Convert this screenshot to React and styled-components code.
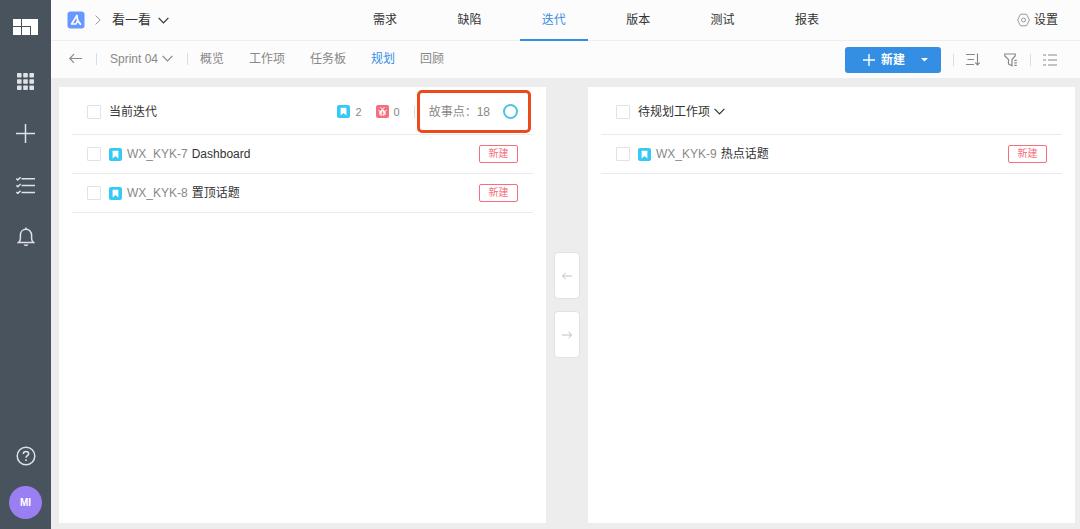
import React, { useState } from "react";
import styled, { createGlobalStyle } from "styled-components";

const NAV_TABS = ["需求", "缺陷", "迭代", "版本", "测试", "报表"];
const VIEW_TABS = ["概览", "工作项", "任务板", "规划", "回顾"];

const SPRINT_ITEMS = [
  { id: "WX_KYK-7", title: "Dashboard", state: "新建" },
  { id: "WX_KYK-8", title: "置顶话题", state: "新建" },
];

const BACKLOG_ITEMS = [{ id: "WX_KYK-9", title: "热点话题", state: "新建" }];

function Chevron() {
  return (
    <svg width="11" height="7" viewBox="0 0 11 7" fill="none" stroke="currentColor" strokeWidth="1.2">
      <path d="M0.6 0.8 5.5 5.8 10.4 0.8" />
    </svg>
  );
}

function Arrow({ width = 12, flip }) {
  return (
    <svg width={width} height={width} viewBox="0 0 12 12" fill="none" stroke="currentColor" strokeWidth="1.1">
      <path d={flip ? "M0 6H11.5M7.8 2 11.5 6 7.8 10" : "M12 6H0.7M4.6 2 0.7 6 4.6 10"} />
    </svg>
  );
}

function StoryIcon() {
  return (
    <svg width="13" height="13" viewBox="0 0 13 13">
      <rect width="13" height="13" rx="2" fill="#35c9f5" />
      <path d="M3.6 2.8h5.8v7.6L6.5 8 3.6 10.4z" fill="#fff" />
    </svg>
  );
}

function BugIcon() {
  return (
    <svg width="13" height="13" viewBox="0 0 13 13">
      <rect width="13" height="13" rx="2" fill="#f5707c" />
      <path d="M6.5 4.6c1.9 0 3.3 2.600 3.300 4.200 0 1.200-1.400 1.900-3.300 1.900s-3.300-.7-3.300-1.900c0-1.600 1.400-4.200 3.300-4.200z" fill="#fff" />
      <path d="M4.500 2.200 6.500 4.200 8.500 2.200M2.300 5.300l2 1.200M10.700 5.300l-2 1.200" stroke="#fff" fill="none" />
      <path d="M6.500 6.200v4.500M4.300 9.400 6.500 7.300 8.700 9.400" stroke="#f5707c" strokeWidth=".8" fill="none" />
    </svg>
  );
}

function WorkItem({ item }) {
  return (
    <Row>
      <ItemLabel>
        <Checkbox />
        <StoryIcon />
        <ItemId>{item.id}</ItemId>
        <span>{item.title}</span>
      </ItemLabel>
      <StateButton>{item.state}</StateButton>
    </Row>
  );
}

function Sidebar() {
  return (
    <Side>
      <Logo href="#" aria-label="Home">
        <svg width="25" height="16" viewBox="0 0 25 16" fill="#fff">
          <path d="M0 0h8v7H0zM9 0h16v16h-7V7H9zM0 8h8v8H0zM9 8h8v8H9z" />
        </svg>
      </Logo>
      <SideButton aria-label="Apps">
        <svg width="17" height="17" viewBox="0 0 17 17" fill="currentColor">
          {[0, 6.2, 12.4].map((y) =>
            [0, 6.2, 12.4].map((x) => (
              <rect key={x + "-" + y} x={x} y={y} width="4.6" height="4.6" rx=".8" />
            ))
          )}
        </svg>
      </SideButton>
      <SideButton aria-label="Create">
        <svg width="19" height="19" viewBox="0 0 19 19" stroke="currentColor" strokeWidth="1.5">
          <path d="M9.500 0v19M0 9.500h19" />
        </svg>
      </SideButton>
      <SideButton aria-label="Tasks">
        <svg width="19" height="17" viewBox="0 0 19 17" fill="none" stroke="currentColor" strokeWidth="1.500">
          <path d="M5.500 1.800H19M5.500 8.600H19M5.500 15.400H19" />
          <path d="M.4 1.500 1.800 3 4.600.2M.4 8.300l1.400 1.400 2.800-2.700M.4 15l1.400 1.400 2.800-2.700" />
        </svg>
      </SideButton>
      <SideButton aria-label="Notifications">
        <svg width="18" height="20" viewBox="0 0 18 20" fill="none" stroke="currentColor" strokeWidth="1.500">
          <path d="M9 .4v1.800M1.400 15.600h15.200c-1.600-1.200-2-2.400-2-4V8.200C14.600 4.800 12.200 2.300 9 2.300S3.400 4.800 3.400 8.200v3.400c0 1.600-.4 2.800-2 4z" />
          <path d="M6.600 17.600c.5 1.200 1.300 1.500 2.400 1.500s1.900-.3 2.400-1.500z" fill="currentColor" stroke="none" />
        </svg>
      </SideButton>
      <SideFooter>
        <SideButton aria-label="Help">
          <svg width="20" height="20" viewBox="0 0 20 20" fill="none" stroke="currentColor" strokeWidth="1.500">
            <circle cx="10" cy="10" r="8.800" />
            <path d="M7.300 8c0-1.700 1.200-2.600 2.700-2.600s2.700.9 2.700 2.400c0 1.800-2.700 1.900-2.700 4" />
            <path d="M10 13.300v1.600" />
          </svg>
        </SideButton>
        <Avatar>MI</Avatar>
      </SideFooter>
    </Side>
  );
}

export default function App() {
  const [tab, setTab] = useState("迭代");
  const [view, setView] = useState("规划");

  return (
    <Page>
      <GlobalStyle />
      <Sidebar />
      <Main>
        <TopBar>
          <Crumbs>
            <svg width="18" height="18" viewBox="0 0 18 18">
              <rect x=".5" y=".5" width="17" height="17" rx="3" fill="#6698ff" />
              <path d="M9.800 4.600 4.600 13h4.200l1.800-3" fill="none" stroke="#fff" strokeWidth="1.600" strokeLinejoin="round" strokeLinecap="round" />
              <path d="M9.800 4.600 10.600 9.200 13.400 13.200" fill="none" stroke="#fff" strokeWidth="1.800" strokeLinejoin="round" strokeLinecap="round" />
            </svg>
            <CrumbArrow width="6" height="10" viewBox="0 0 6 10" fill="none" stroke="#999">
              <path d="M.6.6 5.200 5 .6 9.400" />
            </CrumbArrow>
            <ProjectButton>
              看一看
              <Chevron />
            </ProjectButton>
          </Crumbs>
          <NavTabs>
            {NAV_TABS.map((name) => (
              <NavTab key={name} $active={name === tab} onClick={() => setTab(name)}>
                {name}
              </NavTab>
            ))}
          </NavTabs>
          <Settings>
            <svg width="13" height="14" viewBox="0 0 13 14" fill="none" stroke="#999">
              <path d="M3.500 1.200h6L12.400 7l-2.900 5.800h-6L.6 7z" strokeLinejoin="round" />
              <circle cx="6.500" cy="7" r="2" />
            </svg>
            设置
          </Settings>
        </TopBar>

        <SubBar>
          <BackButton aria-label="Back">
            <Arrow width={13} />
          </BackButton>
          <Divider />
          <SprintButton>
            Sprint 04
            <Chevron />
          </SprintButton>
          <Divider />
          <ViewTabs>
            {VIEW_TABS.map((name) => (
              <ViewTab key={name} $active={name === view} onClick={() => setView(name)}>
                {name}
              </ViewTab>
            ))}
          </ViewTabs>
          <Actions>
            <CreateGroup>
              <CreateButton>
                <svg width="12" height="12" viewBox="0 0 12 12" stroke="currentColor" strokeWidth="1.400">
                  <path d="M6 0v12M0 6h12" />
                </svg>
                新建
              </CreateButton>
              <CreateMore aria-label="More create options">
                <svg width="7" height="4" viewBox="0 0 7 4" fill="currentColor">
                  <path d="M0 0h7L3.500 3.600z" />
                </svg>
              </CreateMore>
            </CreateGroup>
            <Divider />
            <ToolButton aria-label="Sort">
              <svg width="14" height="13" viewBox="0 0 14 13" fill="none" stroke="currentColor" strokeWidth="1.200">
                <path d="M0 1.500h9M1.500 6.500H8M0 11.500h8M11.500.5v11.300M9.200 9.600l2.300 2.300 2.300-2.300" />
              </svg>
            </ToolButton>
            <ToolButton aria-label="Filter">
              <svg width="14" height="14" viewBox="0 0 14 14" fill="none" stroke="currentColor" strokeWidth="1.200">
                <path d="M.8 1h10.400v2L8 6.500v6.300L4.500 11V6.500L.8 3zM10.300 7.300h2.500M10.300 9.800h2.500M10.300 12.300h2.500" />
              </svg>
            </ToolButton>
            <Divider />
            <ToolButton aria-label="List view">
              <svg width="14" height="12" viewBox="0 0 14 12" fill="none" stroke="currentColor" strokeWidth="1.200">
                <path d="M0 1h3M5 1h9M0 6h3M5 6h9M0 11h3M5 11h9" />
              </svg>
            </ToolButton>
          </Actions>
        </SubBar>

        <Board>
          <Panel>
            <PanelHeader>
              <HeaderLabel>
                <Checkbox />
                当前迭代
              </HeaderLabel>
              <Stats>
                <Stat>
                  <StoryIcon />2
                </Stat>
                <Stat>
                  <BugIcon />0
                </Stat>
                <Divider />
                <StoryPoints>
                  <span>故事点：18</span>
                  <Ring />
                </StoryPoints>
              </Stats>
            </PanelHeader>
            {SPRINT_ITEMS.map((item) => (
              <WorkItem key={item.id} item={item} />
            ))}
          </Panel>

          <Movers>
            <MoveButton aria-label="Move to sprint">
              <Arrow width={10} />
            </MoveButton>
            <MoveButton aria-label="Move to backlog">
              <Arrow width={10} flip />
            </MoveButton>
          </Movers>

          <Panel>
            <PanelHeader>
              <BacklogTitle>
                <Checkbox aria-label="待规划工作项" />
                <BacklogButton>
                  待规划工作项
                  <Chevron />
                </BacklogButton>
              </BacklogTitle>
            </PanelHeader>
            {BACKLOG_ITEMS.map((item) => (
              <WorkItem key={item.id} item={item} />
            ))}
          </Panel>
        </Board>
      </Main>
    </Page>
  );
}

const GlobalStyle = createGlobalStyle`
  * {
    box-sizing: border-box;
  }

  body {
    margin: 0;
    color: #333;
    font-family: "Liberation Sans", "Noto Sans CJK SC", sans-serif;
    font-size: 12px;
    line-height: 18px;
  }

  button {
    padding: 0;
    border: 0;
    background: none;
    color: inherit;
    font: inherit;
    cursor: pointer;
  }

  svg {
    display: block;
    flex: none;
  }
`;

const Page = styled.div`
  display: flex;
  min-height: 100vh;
  background: #ededed;
`;

const Side = styled.aside`
  display: flex;
  flex-direction: column;
  align-items: center;
  flex: none;
  width: 51px;
  padding: 19px 0 10px;
  background: #48535d;
  color: #dfe3e8;
`;

const Logo = styled.a`
  margin-bottom: 20px;
`;

const SideButton = styled.button`
  display: flex;
  align-items: center;
  justify-content: center;
  width: 100%;
  height: 52px;
`;

const SideFooter = styled.div`
  display: flex;
  flex-direction: column;
  align-items: center;
  width: 100%;
  margin-top: auto;
  gap: 4px;
`;

const Avatar = styled.button`
  && {
    width: 33px;
    height: 33px;
    border-radius: 50%;
    background: #9a7ff2;
    color: #fff;
    font-size: 10px;
    font-weight: 600;
  }
`;

const Main = styled.main`
  display: flex;
  flex-direction: column;
  flex: 1;
  min-width: 0;
`;

const TopBar = styled.header`
  display: flex;
  height: 41px;
  padding: 0 22px 0 16px;
  border-bottom: 1px solid #eee;
  background: #fcfcfc;
`;

const Crumbs = styled.div`
  display: flex;
  align-items: center;
  width: 284px;
`;

const CrumbArrow = styled.svg`
  margin: 0 11px 0 10px;
`;

const ProjectButton = styled.button`
  && {
    display: flex;
    align-items: center;
    gap: 7px;
    font-size: 13px;
  }
`;

const NavTabs = styled.nav`
  display: flex;
  justify-content: space-between;
  width: 490px;
  margin: 0 auto 0 0;
`;

const NavTab = styled.button`
  && {
    width: 68px;
    height: 41px;
    border-bottom: 2px solid ${(props) => (props.$active ? "#348fe4" : "transparent")};
    color: ${(props) => (props.$active ? "#348fe4" : "#333")};
  }
`;

const Settings = styled.button`
  && {
    display: flex;
    align-items: center;
    gap: 4px;
  }
`;

const SubBar = styled.div`
  display: flex;
  align-items: center;
  height: 37px;
  padding: 0 23px 2px 18px;
  background: #fcfcfc;
  color: #888;
`;

const Divider = styled.span`
  width: 1px;
  height: 12px;
  background: #ddd;
`;

const BackButton = styled.button`
  margin-right: 14px;
`;

const SprintButton = styled.button`
  && {
    display: flex;
    align-items: center;
    gap: 4px;
    margin: 0 14px 0 13px;
  }
`;

const ViewTabs = styled.nav`
  display: flex;
  gap: 25px;
  margin-left: 12px;
`;

const ViewTab = styled.button`
  && {
    color: ${(props) => (props.$active ? "#348fe4" : "#888")};
  }
`;

const Actions = styled.div`
  display: flex;
  align-items: center;
  gap: 12px;
  margin-left: auto;
  padding-top: 2px;
`;

const CreateGroup = styled.div`
  display: flex;
  height: 26px;
  border-radius: 3px;
  background: #348fe4;
  color: #fff;
`;

const CreateButton = styled.button`
  && {
    display: flex;
    align-items: center;
    gap: 6px;
    padding: 0 2px 0 18px;
    font-weight: 600;
  }
`;

const CreateMore = styled.button`
  display: flex;
  align-items: center;
  justify-content: center;
  width: 34px;
`;

const ToolButton = styled.button`
  & + & {
    margin-left: 12px;
  }
`;

const Board = styled.div`
  display: flex;
  flex: 1;
  padding: 9px 5px 6px 8px;
`;

const Panel = styled.section`
  flex: 1;
  min-width: 0;
  padding: 0 13px;
  background: #fff;
`;

const PanelHeader = styled.header`
  display: flex;
  align-items: center;
  justify-content: space-between;
  height: 48px;
  padding: 2px 15px 0;
  border-bottom: 1px solid #eaeaea;
`;

const HeaderLabel = styled.label`
  display: flex;
  align-items: center;
  gap: 8px;
`;

const BacklogTitle = styled.div`
  display: flex;
  align-items: center;
  gap: 8px;
`;

const BacklogButton = styled.button`
  display: flex;
  align-items: center;
  gap: 4px;
`;

const Checkbox = styled.input.attrs({ type: "checkbox" })`
  appearance: none;
  width: 14px;
  height: 14px;
  margin: 0;
  border: 1px solid #e2e2e2;
  border-radius: 1px;
  background: #fff;

  &:checked {
    background: #348fe4;
  }
`;

const Stats = styled.div`
  display: flex;
  align-items: center;
  gap: 14px;
  color: #888;
`;

const Stat = styled.span`
  display: flex;
  align-items: center;
  gap: 5px;
  font-size: 11px;
`;

const StoryPoints = styled.div`
  position: relative;
  display: flex;
  align-items: center;
  gap: 13px;

  &::after {
    content: "";
    position: absolute;
    inset: -13px -13px -12px -12px;
    border: 3px solid #ea4a1c;
    border-radius: 5px;
    pointer-events: none;
  }
`;

const Ring = styled.span`
  width: 15px;
  height: 15px;
  border: 2px solid #48c4e4;
  border-radius: 50%;
`;

const Row = styled.div`
  display: flex;
  align-items: center;
  justify-content: space-between;
  height: 39px;
  padding: 0 15px;
  border-bottom: 1px solid #eaeaea;
`;

const ItemLabel = styled.label`
  display: flex;
  align-items: center;

  input {
    margin-right: 8px;
  }
`;

const ItemId = styled.span`
  margin: 0 4px 0 5px;
  color: #888;
`;

const StateButton = styled.button`
  && {
    width: 39px;
    height: 18px;
    border: 1px solid #f5707c;
    border-radius: 2px;
    color: #f5707c;
    font-size: 10px;
    line-height: 16px;
  }
`;

const Movers = styled.div`
  display: flex;
  flex-direction: column;
  align-items: center;
  justify-content: center;
  gap: 12px;
  width: 42px;
`;

const MoveButton = styled.button`
  && {
    display: flex;
    align-items: center;
    justify-content: center;
    width: 26px;
    height: 47px;
    border: 1px solid #e2e2e2;
    border-radius: 4px;
    background: #fff;
    color: #bbb;
  }
`;
